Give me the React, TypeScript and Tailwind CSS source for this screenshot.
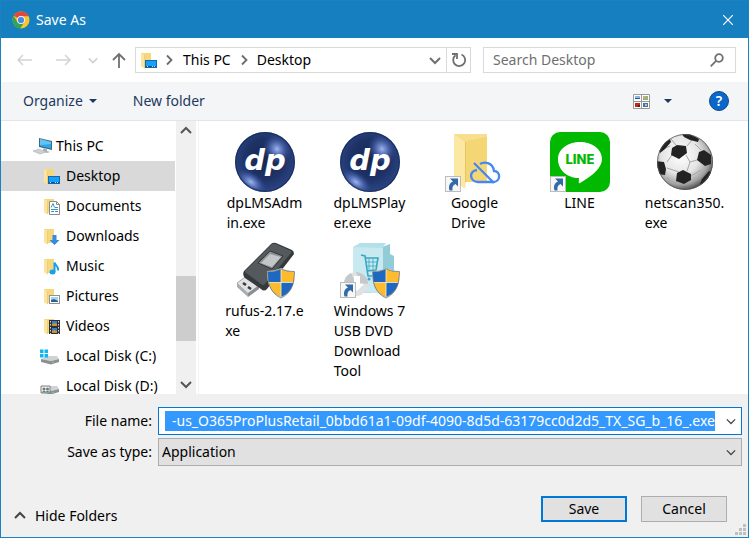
import { useState } from "react";
import type { ReactNode } from "react";

const Chevron = ({ dir, className }: { dir: "up" | "down" | "right"; className?: string }) => {
    const paths = {
        up: "M1 8l5-5 5 5",
        down: "M1 4l5 5 5-5",
        right: "M4 1.500l4.500 4.500-4.500 4.500",
    };
    return (
        <svg viewBox="0 0 12 12" fill="none" stroke="currentColor" className={className}>
            <path d={paths[dir]} />
        </svg>
    );
};

const ChromeLogo = () => (
    <svg viewBox="0 0 18 18" className="size-[18px]">
        <circle cx="9" cy="9" r="8.500" fill="#fbc52c" />
        <path d="M9 9L1.600 4.800A8.500 8.500 0 0 1 16.700 5.300H9z" fill="#e2483b" />
        <path d="M1.600 4.800A8.500 8.500 0 0 0 8.300 17.500L12.300 11 5.700 11.200z" fill="#35a352" />
        <circle cx="9" cy="9" r="4" fill="#f2f2ee" />
        <circle cx="9" cy="9" r="3.100" fill="#4a86ee" />
    </svg>
);

// small folder used behind every library badge in the tree
const LibraryIcon = ({ children }: { children?: ReactNode }) => (
    <svg viewBox="0 0 17 17" className="size-[17px] shrink-0">
        <path d="M1 1h10v14H5z" fill="#f5d77e" />
        <path d="M1 1l4 2v13.500L1 14.500z" fill="#fbe49f" />
        <path d="M4.500 3v13" stroke="#e9c464" strokeWidth=".7" />
        {children}
    </svg>
);

const DesktopIcon = () => (
    <LibraryIcon>
        <rect x="5.500" y="8.500" width="11" height="7" fill="#18a0f8" stroke="#1268ae" />
        <path d="M6 14.500h10" stroke="#0b538f" />
        <path d="M7 14.500h1M12 14.500h1M14 14.500h1" stroke="#bfe3ff" />
    </LibraryIcon>
);

const DocumentsIcon = () => (
    <LibraryIcon>
        <path d="M6.500 3.500h7l3 3v10h-10z" fill="#fff" stroke="#8b8b8b" />
        <path d="M13.500 3.500v3h3" fill="none" stroke="#8b8b8b" />
        <path d="M8 9.500l2-4 1.500 4M12 9.500h3M8 11.500h7M8 13.500h3M12 13.500h3" fill="none" stroke="#3c91c9" />
    </LibraryIcon>
);

const DownloadsIcon = () => (
    <LibraryIcon>
        <path d="M9.500 7h4v5h3L11.500 17l-5-5h3z" fill="#358cdb" />
    </LibraryIcon>
);

const MusicIcon = () => (
    <LibraryIcon>
        <path d="M11.500 14V4.500c.5 3 4.500 3.500 3.500 8" fill="none" stroke="#16a0ee" strokeWidth="2" />
        <ellipse cx="9.500" cy="14" rx="3" ry="2.500" fill="#16a0ee" />
    </LibraryIcon>
);

const PicturesIcon = () => (
    <LibraryIcon>
        <rect x="6.500" y="7.500" width="10" height="8" fill="#fff" stroke="#8b9299" />
        <path d="M8 9h7v5H8z" fill="#a5d2ef" />
        <path d="M8 12l3-1 4 2v1H8z" fill="#2a628e" />
    </LibraryIcon>
);

const VideosIcon = () => (
    <LibraryIcon>
        <path d="M6 2h11v14H6z" fill="#2e3032" />
        <path d="M7.500 3v13M15.500 3v13" stroke="#d8d8d8" strokeDasharray="1.500 1.500" />
        <path d="M9 3h5v5H9zM9 10h5v5H9z" fill="#367fd2" />
        <path d="M9 6l3-1 2 1v2H9zM9 13l2-1 3 1v2H9z" fill="#c89432" />
    </LibraryIcon>
);

const ComputerIcon = () => (
    <svg viewBox="0 0 20 18" className="h-[18px] w-5 shrink-0">
        <path d="M6 1l13 3v9L6 10z" fill="#4b6777" />
        <path d="M7 2l11 3v6.500L7 9z" fill="#28a7ed" />
        <path d="M7 2l11 3v2L7 8z" fill="#61c4f6" />
        <path d="M11 11l3 1v2l3 1-3 1-5-2z" fill="#aab1b7" />
        <path d="M0 14l6-2 7 3-6 2z" fill="#dce0e3" stroke="#a6adb2" strokeWidth=".6" />
        <path d="M2 14l7 2.500M4 13.200l7 2.300" stroke="#a6adb2" strokeWidth=".5" />
    </svg>
);

const DiskIcon = ({ system }: { system?: boolean }) => (
    <svg viewBox="0 0 20 17" className="h-[17px] w-5 shrink-0">
        <path d="M1 11l6-3h10l2 3-8 2z" fill="#d0d3d6" />
        <path d="M1 11l10 2 8-2v3l-8 2.500-10-2.500z" fill="#8c9093" />
        <path d="M12 14.700l2-.5" stroke="#63e36a" />
        {system ? (
            <path d="M0 1.500h3.500V5H0zM4.500 1.500H8V5H4.500zM0 6h3.500v3.500H0zM4.500 6H8v3.500H4.500z" fill="#10b6f0" />
        ) : (
            <g>
                <path d="M1 8h9v7H1z" fill="#f3f3f3" stroke="#7c7c7c" />
                <circle cx="4" cy="11" r="1.500" fill="#9a6b4a" />
                <circle cx="7.500" cy="11" r="1.500" fill="#547f9e" />
                <path d="M2 14.500c0-2 4-2 4 0M5.500 14.500c0-2 4-2 4 0" fill="#3f8d86" />
            </g>
        )}
    </svg>
);

const ShortcutArrow = () => (
    <g>
        <rect x=".5" y="44.500" width="15" height="15" fill="#f7f7f7" stroke="#bcbcbc" />
        <path d="M5 46.500h8v8l-2.500-2.500c-2.500 1-3.500 3-3 6.500H4.500C3 54 5 50.500 8 49.500z" fill="#336aa8" />
    </g>
);

const Shield = () => (
    <g>
        <path d="M32 31c6 0 10-1 14-3 4 2 8 3 14 3 0 14-4 22-14 27-10-5-14-13-14-27z" fill="#fff" />
        <path d="M46 29v13.500H33.500C33 39 33 35 33 32c5 0 9-1 13-3zM46 42.500h12.500C57 49 53 54 46 57z" fill="#fdbb2d" />
        <path d="M46 29c4 2 8 3 13 3 0 3 0 7-.5 10.500H46zM46 42.500V57c-7-3-11-8-12.500-14.500z" fill="#1f68c1" />
        <path d="M33 32c5 0 9-1 13-3v13.500H33.500C33 39 33 35 33 32z" fill="#1f68c1" />
        <path d="M46 29c4 2 8 3 13 3 0 3 0 7-.5 10.500H46z" fill="#fdbb2d" />
        <path d="M33.500 42.500H46V57c-7-3-11-8-12.500-14.500z" fill="#fdbb2d" />
        <path d="M46 42.500h12.500C57 49 53 54 46 57z" fill="#1f68c1" />
        <path d="M46 29v28M33 42.500h26" stroke="#f3f0d2" strokeWidth=".8" />
        <path d="M32.500 31.500c6 0 10-1 13.500-3 3.500 2 7.500 3 13.500 3 0 14-4 22-13.500 26.500-9.500-4.500-13.500-12.500-13.500-26.500z" fill="none" stroke="#6c7481" strokeWidth=".8" />
    </g>
);

const BigIcon = ({ children }: { children: ReactNode }) => (
    <svg viewBox="0 0 60 60" className="size-[60px]" aria-hidden="true">{children}</svg>
);

const DpIcon = () => (
    <BigIcon>
        <defs>
            <radialGradient id="dpBase" cx="50%" cy="45%" r="55%">
                <stop offset="0" stopColor="#17274f" />
                <stop offset=".6" stopColor="#1e3266" />
                <stop offset="1" stopColor="#2b4686" />
            </radialGradient>
            <radialGradient id="dpGlow">
                <stop offset="0" stopColor="#9fb6ee" />
                <stop offset=".45" stopColor="#5671bb" stopOpacity=".8" />
                <stop offset="1" stopColor="#2a4488" stopOpacity="0" />
            </radialGradient>
            <clipPath id="dpClip"><circle cx="30" cy="30" r="30" /></clipPath>
        </defs>
        <circle cx="30" cy="30" r="30" fill="url(#dpBase)" />
        <g clipPath="url(#dpClip)">
            <ellipse cx="42" cy="17" rx="14" ry="16" fill="url(#dpGlow)" transform="rotate(-35 42 17)" />
            <ellipse cx="16" cy="50" rx="18" ry="10" fill="url(#dpGlow)" transform="rotate(35 16 50)" />
        </g>
        <circle cx="30" cy="30" r="29.300" fill="none" stroke="#14244b" strokeWidth="1.200" opacity=".6" />
        <text x="30" y="38" textAnchor="middle" fill="#fff" fontFamily="'DejaVu Sans', sans-serif" fontWeight="700" fontStyle="italic" fontSize="29">dp</text>
    </BigIcon>
);

const GoogleDriveIcon = () => (
    <BigIcon>
        <path d="M9 2h33v48H17z" fill="#f4d675" />
        <path d="M9 2h33v3L21 9z" fill="#f8df8d" />
        <path d="M9 2l12 8v40l-1 7-11-9z" fill="#fce7a3" />
        <path d="M20.500 10v40" stroke="#e7c566" />
        <path d="M32 38c-9 1-7 12 1 12h15c8 0 8-11 1-11-1-8-9-10-14-7" fill="none" stroke="#4388f5" strokeWidth="2.300" />
        <path d="M29 31l20 20" stroke="#4388f5" strokeWidth="2.300" />
        <ShortcutArrow />
    </BigIcon>
);

const LineIcon = () => (
    <BigIcon>
        <rect width="60" height="60" rx="10" fill="#00b900" />
        <path d="M30 10c12 0 22 7 22 17 0 9-10 17-22 24-2 1-1-2-1-5-12 0-21-8-21-19 0-10 10-17 22-17z" fill="#fff" />
        <text x="30" y="32" textAnchor="middle" fill="#00b900" fontFamily="Inter, sans-serif" fontWeight="800" fontSize="13">LINE</text>
        <ShortcutArrow />
    </BigIcon>
);

const SoccerIcon = () => (
    <BigIcon>
        <defs>
            <radialGradient id="ball" cx="42%" cy="38%" r="62%">
                <stop offset="0" stopColor="#fff" />
                <stop offset=".55" stopColor="#e4e4e4" />
                <stop offset=".85" stopColor="#a0a0a0" />
                <stop offset="1" stopColor="#555" />
            </radialGradient>
            <clipPath id="ballClip"><circle cx="30" cy="30" r="28" /></clipPath>
        </defs>
        <circle cx="30" cy="30" r="28" fill="url(#ball)" />
        <g clipPath="url(#ballClip)">
            <path d="M21 13l-5-6M32 14l5-6M31 23l4 7 7-2M17 23l-5 7M15 14l-7 3M35 30l-3 9M24 40l-12-4M36 44l10-6M12 45l5 6 5-1M40 12l6 6" fill="none" stroke="#a5a5a5" />
            <path d="M22 13l9 1 1 7-8 6-8-4 1-7zM44 20l5-2 7 5v9l-6 2-8-6zM28 38l8 4v6l-7 4-8-3 1-8zM1 29l8 1 2 7-1 6-8-1zM27 2l8 0 9 5-1 3-8-2-6-3zM45 52l2-5 7-8 4 3-8 12zM4 18l6-8 5-3 1 3-6 7-5 4z" fill="#232323" />
        </g>
        <circle cx="30" cy="30" r="27.500" fill="none" stroke="#555" strokeWidth=".8" />
    </BigIcon>
);

const UsbIcon = () => (
    <BigIcon>
        <path d="M2 43l11-8 12 11-12 9z" fill="#e1e2e3" stroke="#94979a" strokeWidth=".8" />
        <path d="M2 43l11 10v4L2 47z" fill="#a9acae" />
        <path d="M13 53l11-8v4l-11 8z" fill="#8c8f92" />
        <path d="M8 43l3 2M13 47l3 2" stroke="#37393b" strokeWidth="2.500" />
        <path d="M9 31L36 4q2-2 5-1l16 7q2 1 2 4L32 49q-3 3-6 0L10 38q-3-3-1-7z" fill="#35393c" />
        <path d="M10 31L37 4q2-1 4 0l15 7q1 1 0 2L30 44q-2 2-4 0L11 33q-1-1-1-2z" fill="#54595d" />
        <path d="M23 23l12-12 13 5-11 13z" fill="#8c9194" stroke="#33373a" />
        <path d="M26 23l9-9 11 3-9 10z" fill="#c4c7c9" />
        <Shield />
    </BigIcon>
);

const DownloadToolIcon = () => (
    <BigIcon>
        <path d="M42 7l8-3v10l4 2v33l-12 5z" fill="#93ccd9" />
        <path d="M13 7l7-4h26l-3 4v46H13z" fill="#b3e0e9" />
        <path d="M13 7l30 1v46l-30-4z" fill="#c7e9ef" />
        <path d="M21 15l4 1 3 20h12M25 18h13l-2 12-9 1" fill="none" stroke="#39a6c3" strokeWidth="1.600" />
        <path d="M29 19v11M33 19v11M26 22h11M27 26h10" stroke="#39a6c3" strokeWidth=".8" />
        <circle cx="29" cy="39" r="1.500" fill="#39a6c3" />
        <circle cx="37" cy="38" r="1.500" fill="#39a6c3" />
        <circle cx="16" cy="44" r="12" fill="#dfe1e3" />
        <path d="M16 32a12 12 0 0 1 12 12l-8-1zM16 44L4 43a12 12 0 0 1 7-10z" fill="#c5c9cc" />
        <path d="M14 36h6v8h4l-7 7-7-7h4z" fill="#fff" />
        <g transform="translate(0 -2)"><ShortcutArrow /></g>
        <Shield />
    </BigIcon>
);

const folders = [
    { name: "This PC", icon: <ComputerIcon />, pad: "pl-8 gap-[3px]" },
    { name: "Desktop", icon: <DesktopIcon />, pad: "pl-[42px] gap-[6px]" },
    { name: "Documents", icon: <DocumentsIcon />, pad: "pl-[42px] gap-[6px]" },
    { name: "Downloads", icon: <DownloadsIcon />, pad: "pl-[42px] gap-[6px]" },
    { name: "Music", icon: <MusicIcon />, pad: "pl-[42px] gap-[6px]" },
    { name: "Pictures", icon: <PicturesIcon />, pad: "pl-[42px] gap-[6px]" },
    { name: "Videos", icon: <VideosIcon />, pad: "pl-[42px] gap-[6px]" },
    { name: "Local Disk (C:)", icon: <DiskIcon system />, pad: "pl-[39px] gap-[6px]" },
    { name: "Local Disk (D:)", icon: <DiskIcon />, pad: "pl-[39px] gap-[6px]" },
];

// labels are broken by hand, the way the shell wraps long names
const files = [
    { lines: ["dpLMSAdm", "in.exe"], icon: <DpIcon /> },
    { lines: ["dpLMSPlay", "er.exe"], icon: <DpIcon /> },
    { lines: ["Google", "Drive"], icon: <GoogleDriveIcon /> },
    { lines: ["LINE"], icon: <LineIcon /> },
    { lines: ["netscan350.", "exe"], icon: <SoccerIcon /> },
    { lines: ["rufus-2.17.e", "xe"], icon: <UsbIcon /> },
    { lines: ["Windows 7", "USB DVD", "Download", "Tool"], icon: <DownloadToolIcon /> },
];

export default function App() {
    const [folder, setFolder] = useState("Desktop");
    const [fileName, setFileName] = useState("-us_O365ProPlusRetail_0bbd61a1-09df-4090-8d5d-63179cc0d2d5_TX_SG_b_16_.exe");

    return (
        <div className="flex h-screen flex-col border border-[#1a82c0] bg-white font-['Noto_Sans','Open_Sans',sans-serif] text-sm leading-5 text-black">
            <header className="flex h-[37px] shrink-0 items-center bg-[#157fbf] pr-[11px] pl-[11px] text-white">
                <ChromeLogo />
                <h1 className="ml-[6px] flex-1">Save As</h1>
                <button aria-label="Close" className="p-1">
                    <svg viewBox="0 0 10 10" className="size-[10px]" stroke="currentColor" strokeWidth="1.200">
                        <path d="M0 0l10 10M10 0L0 10" />
                    </svg>
                </button>
            </header>

            <div className="flex h-11 shrink-0 items-center pr-3 pl-4">
                <button aria-label="Back" className="text-[#d4d4d4]">
                    <svg viewBox="0 0 16 12" className="h-3 w-4" fill="none" stroke="currentColor" strokeWidth="1.500"><path d="M15 6H1M6 1L1 6l5 5" /></svg>
                </button>
                <button aria-label="Forward" className="ml-[23px] text-[#d4d4d4]">
                    <svg viewBox="0 0 16 12" className="h-3 w-4" fill="none" stroke="currentColor" strokeWidth="1.500"><path d="M0 6h14M9 1l5 5-5 5" /></svg>
                </button>
                <button aria-label="Recent locations" className="ml-4 text-[#d0d0d0]">
                    <Chevron dir="down" className="size-[10px] stroke-2" />
                </button>
                <button aria-label="Up" className="ml-[14px] text-[#707070]">
                    <svg viewBox="0 0 14 16" className="h-4 w-[14px]" fill="none" stroke="currentColor" strokeWidth="1.800"><path d="M7 16V2M1 8l6-6 6 6" /></svg>
                </button>
                <div className="ml-[9px] flex h-[26px] flex-1 items-center border border-[#d9d9d9] pl-1">
                    <DesktopIcon />
                    <Chevron dir="right" className="ml-[6px] size-3 stroke-[1.800] text-[#6b6b6b]" />
                    <button className="ml-2">This PC</button>
                    <Chevron dir="right" className="ml-[7px] size-3 stroke-[1.800] text-[#6b6b6b]" />
                    <button className="ml-[7px]">Desktop</button>
                    <button aria-label="Previous locations" className="mr-[5px] ml-auto text-[#707070]">
                        <Chevron dir="down" className="size-3 stroke-2" />
                    </button>
                    <button aria-label="Refresh" className="flex h-full w-6 items-center justify-center border-l border-[#d9d9d9] text-[#707070]">
                        <svg viewBox="0 0 16 16" className="size-4" fill="none" stroke="currentColor" strokeWidth="1.800">
                            <path d="M10.500 2.500a6 6 0 1 1-6 .8M1 2h5v5" />
                        </svg>
                    </button>
                </div>
                <div className="ml-3 flex h-[26px] w-[253px] items-center border border-[#d9d9d9] pr-[11px] pl-[9px]">
                    <input type="search" aria-label="Search Desktop" placeholder="Search Desktop" className="min-w-0 flex-1 outline-none placeholder:text-[#6f6f6f]" />
                    <svg viewBox="0 0 14 14" className="size-[14px] text-[#707070]" fill="none" stroke="currentColor" strokeWidth="1.800">
                        <circle cx="9" cy="5" r="3.800" />
                        <path d="M6.300 7.700L.7 13.300" />
                    </svg>
                </div>
            </div>

            <div className="flex h-[39px] shrink-0 items-center border-b border-[#e3e5e8] bg-[#f4f5f7] pr-[19px] pl-[22px] text-[#1c3a5e]">
                <button className="flex items-center gap-[6px]">
                    Organize
                    <svg viewBox="0 0 8 4" className="h-1 w-2" fill="currentColor"><path d="M0 0h8L4 4z" /></svg>
                </button>
                <button className="ml-9">New folder</button>
                <button aria-label="Change your view" className="ml-auto">
                    <svg viewBox="0 0 17 15" className="h-[15px] w-[17px]">
                        <path d="M.5.5h16v14H.5zM8.500.5v14M.5 7.500h16" fill="#fff" stroke="#9a9a9a" />
                        <path d="M2 2h5v2H2z" fill="#86b9ea" />
                        <path d="M2 4h5v1H2z" fill="#3a5577" />
                        <path d="M10 2h5v4h-5z" fill="#88b977" />
                        <path d="M10 2h3v2h-3z" fill="#e59a82" />
                        <path d="M2 9h5v4H2z" fill="#c3261d" />
                        <path d="M5 11h2v2H5z" fill="#55201c" />
                        <path d="M10 9h5v4h-5z" fill="#3972ce" />
                        <path d="M12 10h2v2h-2z" fill="#e2c933" />
                    </svg>
                </button>
                <button aria-label="More view options" className="ml-[14px]">
                    <svg viewBox="0 0 8 4" className="h-1 w-2" fill="currentColor"><path d="M0 0h8L4 4z" /></svg>
                </button>
                <button aria-label="Help" className="ml-[37px] size-5 rounded-full border border-[#10488a] bg-[#0967c9] text-sm leading-[18px] font-semibold text-white">?</button>
            </div>

            <main className="flex min-h-0 flex-1">
                <nav aria-label="Folders" className="w-[174px] shrink-0 overflow-hidden pt-[10px]">
                    {folders.map((item) => (
                        <button
                            key={item.name}
                            onClick={() => setFolder(item.name)}
                            className={`flex h-[30px] w-full items-center whitespace-nowrap ${item.pad} ${folder === item.name ? "bg-[#d9d9d9]" : ""}`}
                        >
                            {item.icon}
                            {item.name}
                        </button>
                    ))}
                </nav>
                <div className="ml-px flex w-5 shrink-0 flex-col items-center bg-[#f0f0f0] text-[#555]">
                    <button aria-label="Scroll up" className="flex h-5 items-center"><Chevron dir="up" className="size-3 stroke-2" /></button>
                    <div className="flex-[134]" />
                    <div className="w-full flex-[65] bg-[#cdcdcd]" />
                    <div className="flex-[33]" />
                    <button aria-label="Scroll down" className="flex h-5 items-center"><Chevron dir="down" className="size-3 stroke-2" /></button>
                </div>
                <section aria-label="Files" className="ml-[2px] grid flex-1 grid-cols-[repeat(auto-fill,105px)] content-start gap-y-[7px] border-l border-[#f3f3f3] pt-[11px] pl-[13px]">
                    {files.map((file) => (
                        <button key={file.lines.join("")} className="flex flex-col items-center justify-start">
                            {file.icon}
                            <span className="pt-px text-left">
                                {file.lines.map((line) => (
                                    <span key={line} className="block">{line}</span>
                                ))}
                            </span>
                        </button>
                    ))}
                </section>
            </main>

            <footer className="shrink-0 bg-[#f0f0f0] pt-[13px] pr-[6px] pb-[2px]">
                <div className="grid grid-cols-[151px_1fr] items-center gap-x-[6px] gap-y-[3px]">
                    <label htmlFor="fileName" className="text-right">File name:</label>
                    <div className="flex h-7 items-center border border-[#0078d7] bg-white pr-[5px] pl-[6px]">
                        <input
                            id="fileName"
                            value={fileName}
                            onChange={(e) => setFileName(e.target.value)}
                            className="h-5 min-w-0 flex-1 bg-[#3399ff] text-right text-white outline-none"
                        />
                        <button aria-label="Recent names" className="ml-[11px] text-[#444]"><Chevron dir="down" className="size-[10px] stroke-[1.500]" /></button>
                    </div>
                    <label htmlFor="fileType" className="text-right">Save as type:</label>
                    <div className="relative">
                        <select id="fileType" className="block h-7 w-full appearance-none border border-[#acacac] bg-[#e1e1e1] pl-[3px]">
                            <option>Application</option>
                        </select>
                        <Chevron dir="down" className="pointer-events-none absolute top-[9px] right-[6px] size-[10px] stroke-[1.500] text-[#444]" />
                    </div>
                </div>
                <div className="mt-[30px] flex items-start pr-[15px] pl-[13px]">
                    <button className="flex h-10 items-center gap-[9px]">
                        <Chevron dir="up" className="size-3 stroke-2 text-[#444]" />
                        Hide Folders
                    </button>
                    <button className="ml-auto h-[26px] w-[86px] border-2 border-[#0078d7] bg-[#e1e1e1] leading-[22px]">Save</button>
                    <button className="ml-[14px] h-[26px] w-[86px] border border-[#adadad] bg-[#e1e1e1] leading-6">Cancel</button>
                </div>
                <div className="-mt-3 -mr-1 flex justify-end">
                    <svg viewBox="0 0 11 11" className="size-[11px]" fill="#bfbfbf">
                        <path d="M8 0h3v3H8zM8 4h3v3H8zM4 4h3v3H4zM0 8h3v3H0zM4 8h3v3H4zM8 8h3v3H8z" />
                    </svg>
                </div>
            </footer>
        </div>
    );
}
